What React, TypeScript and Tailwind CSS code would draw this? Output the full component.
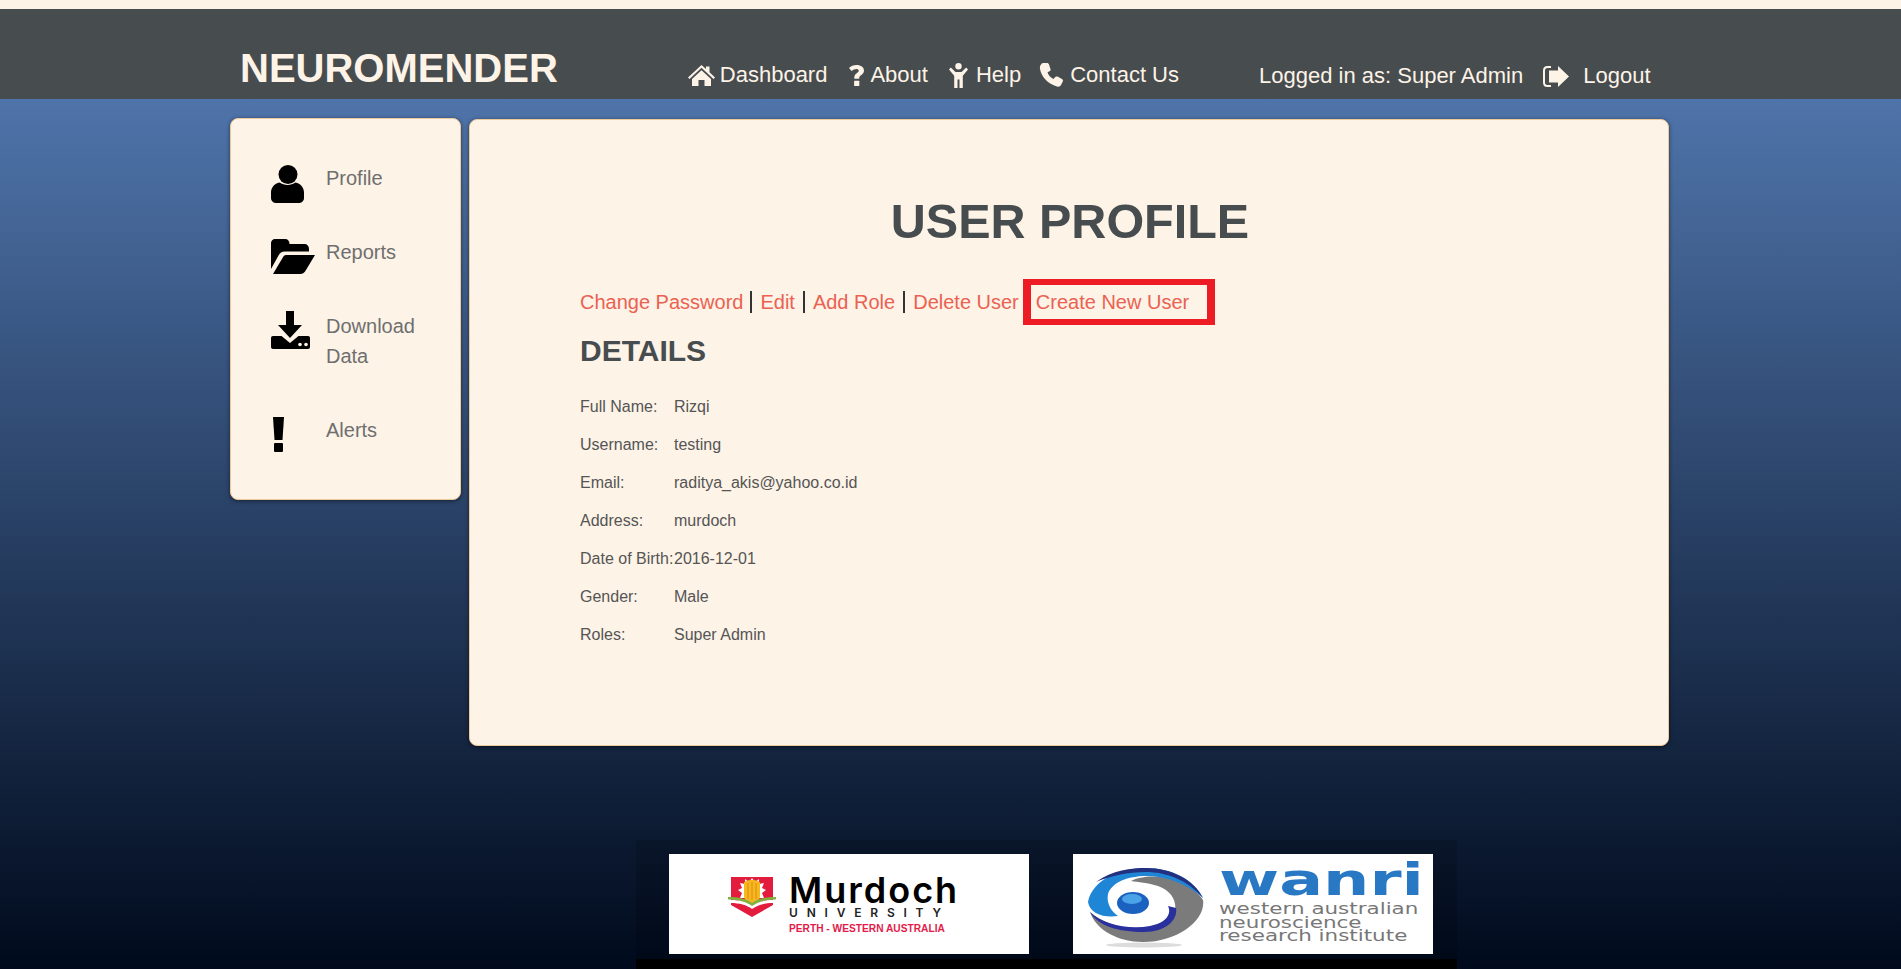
import type { ReactNode } from 'react';

const navLinks = [
  { label: 'Dashboard', icon: <HomeIcon />, gap: 'ml-[5px]', className: 'mr-[22px]' },
  { label: 'About', icon: <QuestionIcon />, gap: 'ml-[6px]', className: 'mr-[21px]' },
  { label: 'Help', icon: <ChildIcon />, gap: 'ml-[8px]', className: 'mr-[18px]' },
  { label: 'Contact Us', icon: <PhoneIcon />, gap: 'ml-[7px]', className: 'mr-[21px]' },
];

const sideLinks: { label: ReactNode; icon: ReactNode; className: string }[] = [
  { label: 'Profile', icon: <UserIcon />, className: 'h-[74px]' },
  { label: 'Reports', icon: <FolderIcon />, className: 'h-[74px]' },
  { label: 'Download Data', icon: <DownloadIcon />, className: 'h-[104px]' },
  { label: 'Alerts', icon: <AlertIcon />, className: 'h-[74px]' },
];

const details = [
  ['Full Name:', 'Rizqi'],
  ['Username:', 'testing'],
  ['Email:', 'raditya_akis@yahoo.co.id'],
  ['Address:', 'murdoch'],
  ['Date of Birth:', '2016-12-01'],
  ['Gender:', 'Male'],
  ['Roles:', 'Super Admin'],
];

function HomeIcon() {
  return (
    <svg viewBox="0 0 27 21" className="h-[21px] w-[27px] fill-current">
      <path d="M13.500 0 18 4V1.500h3.500V7.200L27 12.400l-1.500 1.600L13.500 2.800 1.500 14 0 12.400Z" />
      <path d="M13.500 5.200 23 14v7h-6.500v-6h-6v6H4v-7Z" />
    </svg>
  );
}

function QuestionIcon() {
  return (
    <svg viewBox="0 0 15 21" className="h-[21px] w-[15px] fill-current">
      <path d="M7.600 0C11.800 0 15 2.200 15 5.600c0 2.300-1.300 3.500-2.900 4.600-1.300.9-1.900 1.400-1.900 2.900v.6H5.300v-1.100c0-2.400 1-3.400 2.400-4.400 1.300-.9 2-1.500 2-2.500 0-1-.9-1.700-2.300-1.700-1.700 0-3.300.7-4.800 2L0 3C1.900 1.100 4.500 0 7.600 0Z" />
      <rect x="5.100" y="15.800" width="5.200" height="5.200" rx=".5" />
    </svg>
  );
}

function ChildIcon() {
  return (
    <svg viewBox="0 0 19 25" className="h-[25px] w-[19px] fill-current">
      <circle cx="9.500" cy="3.200" r="3.200" />
      <path d="M1.800 4.600 6.500 9h6l4.700-4.400L19 6.400l-5.200 6.400V25h-3.300v-8.500h-2V25H5.200V12.800L0 6.400Z" />
    </svg>
  );
}

function PhoneIcon() {
  return (
    <svg viewBox="0 0 24 24" className="h-[24px] w-[24px] fill-current">
      <path d="M4 0H8C9 0 9.500.5 10 1.500L11.500 6C11.800 7 11.400 7.800 10.500 8.300L8.500 9.300C9.500 12.500 11.500 14.800 14.500 16L16 14.200C16.700 13.400 17.600 13.200 18.500 13.600L23 16C24 16.500 24.200 17.500 23.800 18.500L22 22C21.200 23.400 19.800 24 18 23.500 9 21 2.500 14 1 6 .5 3 2 .5 4 0Z" />
    </svg>
  );
}

function LogoutIcon() {
  return (
    <svg viewBox="0 0 26 21" className="h-[21px] w-[26px] fill-current">
      <path d="M8 1H4.500C2.500 1 1 2.500 1 4.500v12C1 18.500 2.500 20 4.500 20H8" fill="none" stroke="currentColor" strokeWidth="2" />
      <path d="M6 4.500h9V0l11 10.500L15 21v-4.500H6Z" />
    </svg>
  );
}

function UserIcon() {
  return (
    <svg viewBox="0 0 33 38" className="mt-[4px] h-[38px] w-[33px] fill-black">
      <circle cx="17" cy="9.500" r="9.500" />
      <path d="M8.500 17.500c4.500 3.200 11.500 3.200 16 0 5 1.200 8.500 5 8.500 10V33c0 2.800-2.200 5-5 5H5c-2.800 0-5-2.200-5-5v-5.500c0-5 3.500-8.800 8.500-10Z" />
    </svg>
  );
}

function FolderIcon() {
  return (
    <svg viewBox="0 0 44 35" className="h-[35px] w-[44px] fill-black">
      <path d="M4 0h10c3 0 4.500 2 4.500 5h15c2.800 0 4.500 2 4.500 5v2.500H14c-3.500 0-5 1.500-6.500 4L0 30V4C0 1.800 1.800 0 4 0Z" />
      <path d="M15 16h29l-9 15c-1.500 2.800-3 4-6 4H2l9.500-16c1-2 2-3 3.500-3Z" />
    </svg>
  );
}

function DownloadIcon() {
  return (
    <svg viewBox="0 0 39 38" className="h-[38px] w-[39px] fill-black">
      <path d="M15 0h8v14h8L19 27 7 14h8Z" />
      <path d="M2 25h8.500L19 32l8.500-7H37c1.200 0 2 .8 2 2v9c0 1.200-.8 2-2 2H2c-1.200 0-2-.8-2-2v-9c0-1.200.8-2 2-2Z" />
      <circle cx="29" cy="33.500" r="1.800" fill="#fdf3e7" />
      <circle cx="35" cy="33.500" r="1.800" fill="#fdf3e7" />
    </svg>
  );
}

function AlertIcon() {
  return (
    <svg viewBox="0 0 11 35" className="ml-[2px] h-[35px] w-[11px] fill-black">
      <path d="M0 0h11L9.500 23h-8Z" />
      <rect x="1" y="26" width="9" height="9" rx="1" />
    </svg>
  );
}

function MurdochLogo() {
  return (
    <div className="flex h-[100px] w-[360px] shrink-0 items-start gap-[13px] bg-white pl-[59px] pt-[23px]">
      <svg viewBox="0 0 48 40" className="h-[40px] w-[48px] shrink-0">
        <path d="M3 0h42v28L24 40 3 28Z" fill="#e31b3d" />
        <path d="M24 1 27 5 31 2 31 7 36 6 34 11 38 13 34 16 36 21H12L14 16 10 13 14 11 12 6 17 7 17 2 21 5Z" fill="#fff" />
        <path d="M16 6C16 4 20 3 24 3s8 1 8 3v13c0 4-4 7-8 7s-8-3-8-7Z" fill="#f5b81f" />
        <path d="M20 6v16M24 5v18M28 6v16" stroke="#e08a12" strokeWidth="1" />
        <path d="M0 20c8 0 18 1 24 6 6-5 16-6 24-6v2.500c-8 0-18 2-24 7-6-5-16-7-24-7Z" fill="#7fb23f" />
        <path d="M3 23c8 0 16 2 21 6 5-4 13-6 21-6v3c-8 0-16 2-21 6-5-4-13-6-21-6Z" fill="#fff" />
      </svg>
      <div className="flex flex-col font-['Inter',sans-serif]">
        <span className="text-[36px] font-semibold leading-[26px] tracking-[2px] text-black">Murdoch</span>
        <span className="mt-[5px] text-[12px] font-semibold leading-[10px] tracking-[8.800px] text-[#222]">UNIVERSITY</span>
        <span className="mt-[6px] font-['Liberation_Sans',sans-serif] text-[10.200px] font-bold leading-[10px] text-[#e31b4b]">
          PERTH - WESTERN AUSTRALIA
        </span>
      </div>
    </div>
  );
}

function WanriLogo() {
  return (
    <div className="flex h-[100px] w-[360px] shrink-0 items-start gap-[15px] bg-white pl-[15px] pt-[14px]">
      <svg viewBox="0 0 116 80" className="h-[80px] w-[116px] shrink-0">
        <ellipse cx="56" cy="77" rx="38" ry="2.500" fill="#dcdcdc" />
        <path d="M43 13C60 4 100 8 115 32 118 52 90 74 55 74 30 74 8 62 2 44 20 60 60 68 82 52 92 42 88 24 70 18 60 15 50 14 43 13Z" fill="#7b7b7b" />
        <path d="M0 34C4 12 32 0 58 0 84 0 106 12 115 30 100 16 78 8 58 8 40 8 24 14 20 26 18 36 24 44 30 48 16 50 2 46 0 34Z" fill="#1f86d6" />
        <path d="M8 14C24 2 44 0 58 0 84 0 106 12 115 30 100 12 78 4 58 4 40 4 22 8 8 14Z" fill="#23307f" />
        <path d="M2 44C14 56 40 62 62 58 78 55 84 46 80 38L88 40C90 52 78 64 56 64 30 64 10 58 2 44Z" fill="#2a2f9e" />
        <ellipse cx="45" cy="35" rx="16" ry="11" fill="#1b62c0" />
        <ellipse cx="44" cy="31" rx="10" ry="5" fill="#4aa3e6" />
      </svg>
      <div className="flex flex-col font-['DejaVu_Sans',sans-serif] text-[#777]">
        <span className="mt-[-9px] origin-left scale-x-[1.48] text-[44px] font-bold leading-[42px] text-[#2878c4]">wanri</span>
        <span className="mt-[2px] origin-left scale-x-[1.43] whitespace-nowrap text-[15px] leading-[13.500px]">western australian</span>
        <span className="origin-left scale-x-[1.43] whitespace-nowrap text-[15px] leading-[13.500px]">neuroscience</span>
        <span className="origin-left scale-x-[1.43] whitespace-nowrap text-[15px] leading-[13.500px]">research institute</span>
      </div>
    </div>
  );
}

export default function App() {
  return (
    <div className="relative h-[969px] overflow-hidden bg-[linear-gradient(to_bottom,#4f74aa_99px,#000a1c_100%)] font-['Liberation_Sans',Arial,sans-serif]">
      <div className="h-[9px] bg-[#fdf3e7]" />

      <header className="h-[90px] bg-[#474c4f] text-[#fdf3e7]">
        <div className="ml-[240px] flex h-full items-start">
          <h1 className="mt-[36px] text-[40px] font-bold leading-[46px]">NEUROMENDER</h1>
          <nav className="ml-[130px] mt-[52px] flex items-center text-[22px] leading-[28px]">
            {navLinks.map((link) => (
              <a key={link.label} className={`flex items-center ${link.className}`}>
                {link.icon}
                <span className={link.gap}>{link.label}</span>
              </a>
            ))}
          </nav>
          <div className="ml-[59px] mt-[53px] flex items-center text-[22px] leading-[28px]">
            <span>Logged in as: Super Admin</span>
            <span className="ml-[20px]">
              <LogoutIcon />
            </span>
            <span className="ml-[14px]">Logout</span>
          </div>
        </div>
      </header>

      <main className="ml-[230px] mt-[19px] flex items-start gap-[8px]">
        <aside className="h-[382px] w-[231px] rounded-[8px] border border-[#ecc99b] bg-[#fdf3e7] pl-[40px] pt-[33px] shadow-[0_1px_4px_rgba(0,0,0,0.5)]">
          {sideLinks.map((link, index) => (
            <a key={index} className={`flex ${link.className}`}>
              <span className="flex h-[60px] w-[55px] shrink-0 items-center">{link.icon}</span>
              <span className="mt-[11px] w-[110px] text-[20px] leading-[30px] text-[#6f6f6f]">{link.label}</span>
            </a>
          ))}
        </aside>

        <section className="mt-px h-[627px] w-[1200px] rounded-[8px] border border-[#ecc99b] bg-[#fdf3e7] pl-[110px] pt-[74px] shadow-[0_1px_4px_rgba(0,0,0,0.5)]">
          <h2 className="pr-[108px] text-center text-[48.500px] font-bold leading-[55px] text-[#474c4f]">USER PROFILE</h2>

          <div className="mt-[30px] flex h-[46px] items-center text-[20px] text-[#eb6152]">
            <a className="border-r-2 border-[#333] pr-[7px] leading-[22px]">Change Password</a>
            <a className="border-r-2 border-[#333] px-[8px] leading-[22px]">Edit</a>
            <a className="border-r-2 border-[#333] px-[8px] leading-[22px]">Add Role</a>
            <a className="pl-[8px] pr-[4px] leading-[22px]">Delete User</a>
            <a className="flex h-[46px] w-[192px] items-center border-x-8 border-y-[6px] border-[#ed1c24] pl-[5px]">Create New User</a>
          </div>

          <h3 className="mt-[8px] text-[30px] font-bold leading-[36px] text-[#474c4f]">DETAILS</h3>

          <dl className="mt-[19px] text-[16px] text-[#555]">
            {details.map(([term, value]) => (
              <div key={term} className="flex h-[38px] items-center">
                <dt className="w-[94px]">{term}</dt>
                <dd>{value}</dd>
              </div>
            ))}
          </dl>
        </section>
      </main>

      <footer className="absolute bottom-0 left-[636px] h-[129px] w-[821px] bg-black/15">
        <div className="flex pl-[33px] pt-[14px]">
          <MurdochLogo />
          <div className="ml-[44px]">
            <WanriLogo />
          </div>
        </div>
        <div className="absolute bottom-0 left-0 h-[10px] w-full bg-black" />
      </footer>
    </div>
  );
}
